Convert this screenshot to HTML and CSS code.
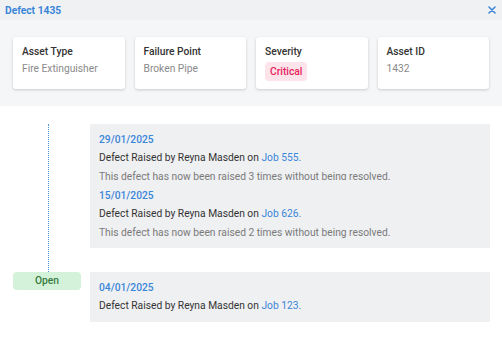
FILE: index.html
```html
<!DOCTYPE html>
<html lang="en">

<head>
    <meta charset="UTF-8">
    <meta name="viewport" content="width=device-width, initial-scale=1.0">
    <title>Defect 1435</title>
    <link rel="stylesheet" href="styles.css">
</head>

<body>
    <div class="header">
        <h1>Defect 1435</h1>
        <button class="close" aria-label="Close">
            <svg width="8" height="8" viewBox="0 0 8 8">
                <path d="M1 1 L7 7 M7 1 L1 7" stroke="#3a86d9" stroke-width="1.5" stroke-linecap="round" />
            </svg>
        </button>
    </div>

    <div class="summary">
        <div class="card">
            <div class="card-title">Asset Type</div>
            <div class="card-value">Fire Extinguisher</div>
        </div>
        <div class="card">
            <div class="card-title">Failure Point</div>
            <div class="card-value">Broken Pipe</div>
        </div>
        <div class="card">
            <div class="card-title">Severity</div>
            <span class="badge">Critical</span>
        </div>
        <div class="card">
            <div class="card-title">Asset ID</div>
            <div class="card-value">1432</div>
        </div>
    </div>

    <div class="timeline">
        <div class="rail"></div>
        <div class="log log-scroll">
            <div class="entry clipped">
                <div class="date">29/01/2025</div>
                <div class="text">Defect Raised by Reyna Masden on <a href="#">Job 555.</a></div>
                <div class="note">This defect has now been raised 3 times without being resolved.</div>
            </div>
            <div class="entry">
                <div class="date">15/01/2025</div>
                <div class="text">Defect Raised by Reyna Masden on <a href="#">Job 626.</a></div>
                <div class="note">This defect has now been raised 2 times without being resolved.</div>
            </div>
        </div>

        <div class="status-cell">
            <span class="status">Open</span>
        </div>
        <div class="log">
            <div class="entry">
                <div class="date">04/01/2025</div>
                <div class="text">Defect Raised by Reyna Masden on <a href="#">Job 123.</a></div>
            </div>
        </div>
    </div>
</body>

</html>
```

FILE: styles.css
```css
body {
    margin: 0;
    font-family: Roboto, "Liberation Sans", sans-serif;
    font-size: 10.25px;
    color: #333;
    background: #fff;
}

.header {
    height: 20px;
    display: flex;
    align-items: center;
    justify-content: space-between;
    padding: 0 6px 0 5px;
    background: #f0f1f3;
}

.header h1 {
    margin: 0;
    font-size: 10.25px;
    font-weight: 700;
    color: #3a86d9;
}

.close {
    border: 0;
    padding: 0;
    background: none;
    display: flex;
}

.summary {
    display: grid;
    grid-template-columns: repeat(4, 111.5px);
    gap: 10px;
    padding: 17px 13px;
    background: #f5f6f8;
}

.card {
    height: 52px;
    box-sizing: border-box;
    padding: 7px 9px;
    background: #fff;
    border-radius: 3px;
    box-shadow: 0 1px 3px rgba(0, 0, 0, 0.18);
    line-height: 15px;
}

.card-title {
    font-weight: 500;
    color: #333;
    margin-bottom: 2px;
}

.card-value {
    color: #8a8a8a;
}

.badge {
    display: inline-block;
    margin-top: 1px;
    padding: 2px 5px;
    border-radius: 4px;
    background: #fde3ea;
    color: #e5245e;
    font-weight: 500;
}

.timeline {
    display: grid;
    grid-template-columns: 90px 400px;
    margin-top: 18px;
}

.rail {
    margin-left: 48px;
    border-left: 1px dotted #4d93e0;
}

.log {
    background: #eff0f2;
    line-height: 18.5px;
}

.log-scroll {
    height: 124px;
    overflow: hidden;
    margin-bottom: 24px;
}

.entry {
    padding: 6.5px 9px;
}

.entry.clipped {
    height: 56px;
    box-sizing: border-box;
    padding-bottom: 0;
    overflow: hidden;
}

.date {
    color: #3a86d9;
    font-weight: 500;
}

.text a {
    color: #3a86d9;
    text-decoration: none;
}

.note {
    color: #7a7a7a;
}

.status-cell {
    padding-left: 13px;
}

.status {
    display: block;
    width: 68px;
    height: 18px;
    line-height: 18px;
    text-align: center;
    border-radius: 4px;
    background: #d3f2d9;
    color: #367a40;
    font-weight: 500;
}
```
